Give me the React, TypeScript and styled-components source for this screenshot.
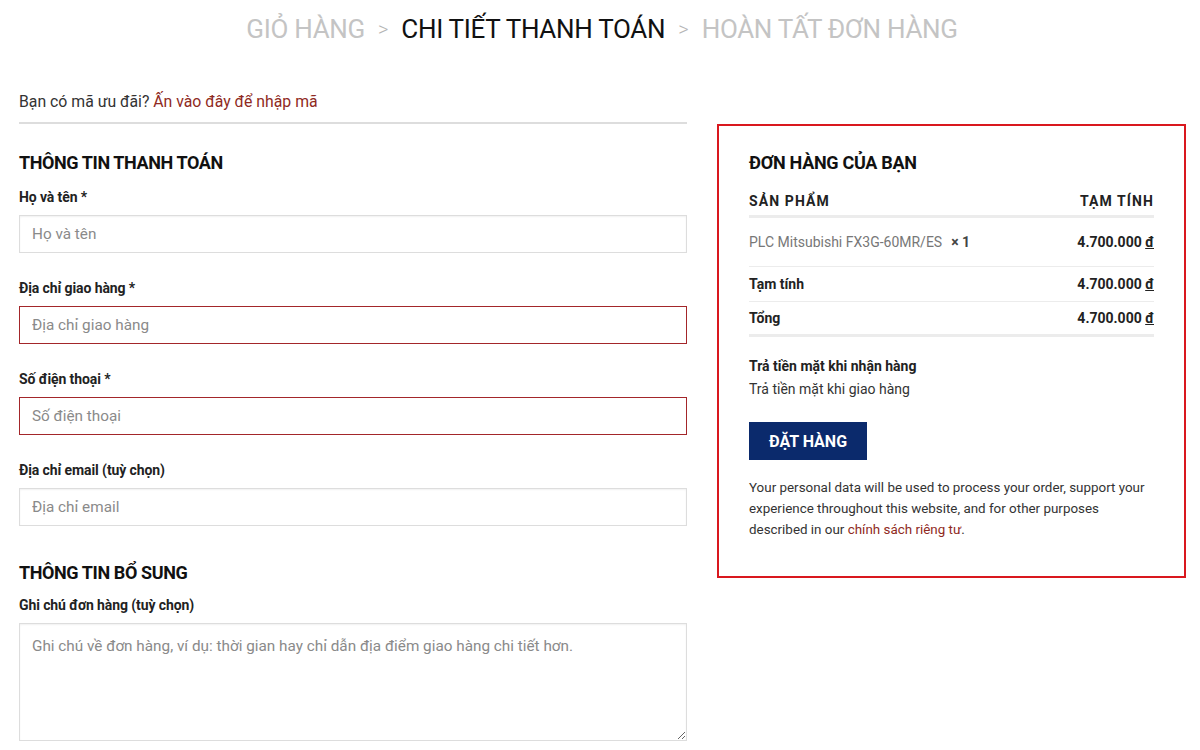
import React from "react";
import styled, { createGlobalStyle } from "styled-components";

const Global = createGlobalStyle`
  html, body { margin: 0; padding: 0; background: #fff; }
  body { font-family: Roboto, "Noto Sans", Arial, sans-serif; color: #333; }
  * { box-sizing: border-box; }
`;

const Page = styled.div`
  width: 1200px;
  height: 750px;
  overflow: hidden;
  display: flex;
  flex-direction: column;
`;

const Breadcrumb = styled.nav`
  display: flex;
  justify-content: center;
  align-items: center;
  gap: 13px;
  padding: 13px 0 11px 4px;
  font-size: 26px;
  line-height: 32px;
  text-transform: uppercase;
`;

const Crumb = styled.span<{ $active?: boolean }>`
  color: ${(p) => (p.$active ? "#111" : "#c4c4c4")};
  font-weight: 400;
  letter-spacing: -0.3px;
`;

const Sep = styled.span`
  color: #b5b5b5;
  font-size: 20px;
  font-weight: 300;
`;

const Notice = styled.div`
  margin: 35px 0 0 19px;
  width: 668px;
  padding-bottom: 9px;
  border-bottom: 2px solid #ddd;
  font-size: 15.8px;
  line-height: 22px;
  color: #333;
`;

const Link = styled.a`
  color: #8f2a22;
  text-decoration: none;
`;

const Columns = styled.div`
  display: grid;
  grid-template-columns: 668px 469px;
  column-gap: 30px;
  padding-left: 19px;
  align-items: start;
`;

const LeftCol = styled.div`
  display: flex;
  flex-direction: column;
`;

const SectionTitle = styled.h3<{ $top: number; $bottom: number }>`
  margin: ${(p) => p.$top}px 0 ${(p) => p.$bottom}px;
  font-size: 18px;
  line-height: 24px;
  font-weight: 700;
  color: #111;
  text-transform: uppercase;
  letter-spacing: -0.4px;
`;

const Field = styled.div`
  display: flex;
  flex-direction: column;
  gap: 8px;
  margin-bottom: 25px;
`;

const Label = styled.label`
  font-size: 14px;
  line-height: 20px;
  font-weight: 700;
  color: #222;
  letter-spacing: -0.1px;
`;

const Input = styled.input<{ $error?: boolean }>`
  height: 38px;
  width: 100%;
  border: 1px solid ${(p) => (p.$error ? "#a3262a" : "#ddd")};
  box-shadow: ${(p) => (p.$error ? "none" : "inset 0 1px 2px rgba(0,0,0,0.06)")};
  padding: 0 12px;
  font-family: inherit;
  font-size: 15.3px;
  color: #333;
  background: #fff;
  outline: none;
  &::placeholder { color: #8a8a8a; }
`;

const TextArea = styled.textarea`
  height: 118px;
  width: 100%;
  border: 1px solid #ddd;
  box-shadow: inset 0 1px 2px rgba(0,0,0,0.06);
  padding: 12px 12px;
  font-family: inherit;
  font-size: 15.3px;
  line-height: 20px;
  color: #333;
  outline: none;
  &::placeholder { color: #8a8a8a; }
`;

const OrderBox = styled.aside`
  border: 2px solid #d9181e;
  padding: 25px 30px 36px;
  display: flex;
  flex-direction: column;
`;

const BoxTitle = styled.h3`
  margin: 0;
  font-size: 18px;
  line-height: 24px;
  font-weight: 700;
  color: #111;
  text-transform: uppercase;
  letter-spacing: -0.3px;
`;

const Row = styled.div<{ $h: number; $thick?: boolean; $head?: boolean }>`
  display: flex;
  justify-content: space-between;
  align-items: center;
  height: ${(p) => p.$h}px;
  border-bottom: ${(p) => (p.$thick ? "3px solid #ececec" : "1px solid #ececec")};
  font-size: 14px;
  ${(p) =>
    p.$head
      ? `font-weight: 700; letter-spacing: 1.1px; text-transform: uppercase; color: #222; margin-top: 11px;`
      : ``}
`;

const Product = styled.span`
  color: #777;
`;

const Qty = styled.strong`
  color: #444;
  font-weight: 700;
  margin-left: 9px;
`;

const Strong = styled.span`
  font-weight: 700;
  color: #222;
`;

const Money = styled.span`
  font-weight: 700;
  color: #222;
  u { text-decoration: underline; text-underline-offset: 1px; }
`;

const Payment = styled.div`
  margin-top: 18px;
  font-size: 14px;
  line-height: 23px;
  color: #333;
`;

const PaymentTitle = styled.div`
  font-weight: 700;
  color: #222;
`;

const Button = styled.button`
  margin-top: 21px;
  align-self: flex-start;
  width: 118px;
  height: 38px;
  border: none;
  background: #0b2a6c;
  color: #fff;
  font-family: inherit;
  font-weight: 700;
  font-size: 16px;
  text-transform: uppercase;
  cursor: pointer;
`;

const Privacy = styled.p`
  margin: 17px 0 0;
  font-size: 13.4px;
  line-height: 21px;
  color: #333;
`;

function Amount() {
  return (
    <Money>
      4.700.000 <u>đ</u>
    </Money>
  );
}

export default function App() {
  return (
    <Page>
      <Global />
      <Breadcrumb>
        <Crumb>Giỏ hàng</Crumb>
        <Sep>&gt;</Sep>
        <Crumb $active>Chi tiết thanh toán</Crumb>
        <Sep>&gt;</Sep>
        <Crumb>Hoàn tất đơn hàng</Crumb>
      </Breadcrumb>

      <Notice>
        Bạn có mã ưu đãi? <Link href="#">Ấn vào đây để nhập mã</Link>
      </Notice>

      <Columns>
        <LeftCol>
          <SectionTitle $top={27} $bottom={12}>Thông tin thanh toán</SectionTitle>
          <Field>
            <Label>Họ và tên *</Label>
            <Input placeholder="Họ và tên" />
          </Field>
          <Field>
            <Label>Địa chỉ giao hàng *</Label>
            <Input $error placeholder="Địa chỉ giao hàng" />
          </Field>
          <Field>
            <Label>Số điện thoại *</Label>
            <Input $error placeholder="Số điện thoại" />
          </Field>
          <Field>
            <Label>Địa chỉ email (tuỳ chọn)</Label>
            <Input placeholder="Địa chỉ email" />
          </Field>
          <SectionTitle $top={10} $bottom={10}>Thông tin bổ sung</SectionTitle>
          <Field>
            <Label>Ghi chú đơn hàng (tuỳ chọn)</Label>
            <TextArea placeholder="Ghi chú về đơn hàng, ví dụ: thời gian hay chỉ dẫn địa điểm giao hàng chi tiết hơn." />
          </Field>
        </LeftCol>

        <OrderBox>
          <BoxTitle>Đơn hàng của bạn</BoxTitle>
          <Row $h={32} $thick $head>
            <span>Sản phẩm</span>
            <span>Tạm tính</span>
          </Row>
          <Row $h={49}>
            <span>
              <Product>PLC Mitsubishi FX3G-60MR/ES</Product>
              <Qty>× 1</Qty>
            </span>
            <Amount />
          </Row>
          <Row $h={35}>
            <Strong>Tạm tính</Strong>
            <Amount />
          </Row>
          <Row $h={35} $thick>
            <Strong>Tổng</Strong>
            <Amount />
          </Row>
          <Payment>
            <PaymentTitle>Trả tiền mặt khi nhận hàng</PaymentTitle>
            <div>Trả tiền mặt khi giao hàng</div>
          </Payment>
          <Button>Đặt hàng</Button>
          <Privacy>
            Your personal data will be used to process your order, support your
            experience throughout this website, and for other purposes described
            in our <Link href="#">chính sách riêng tư</Link>.
          </Privacy>
        </OrderBox>
      </Columns>
    </Page>
  );
}
